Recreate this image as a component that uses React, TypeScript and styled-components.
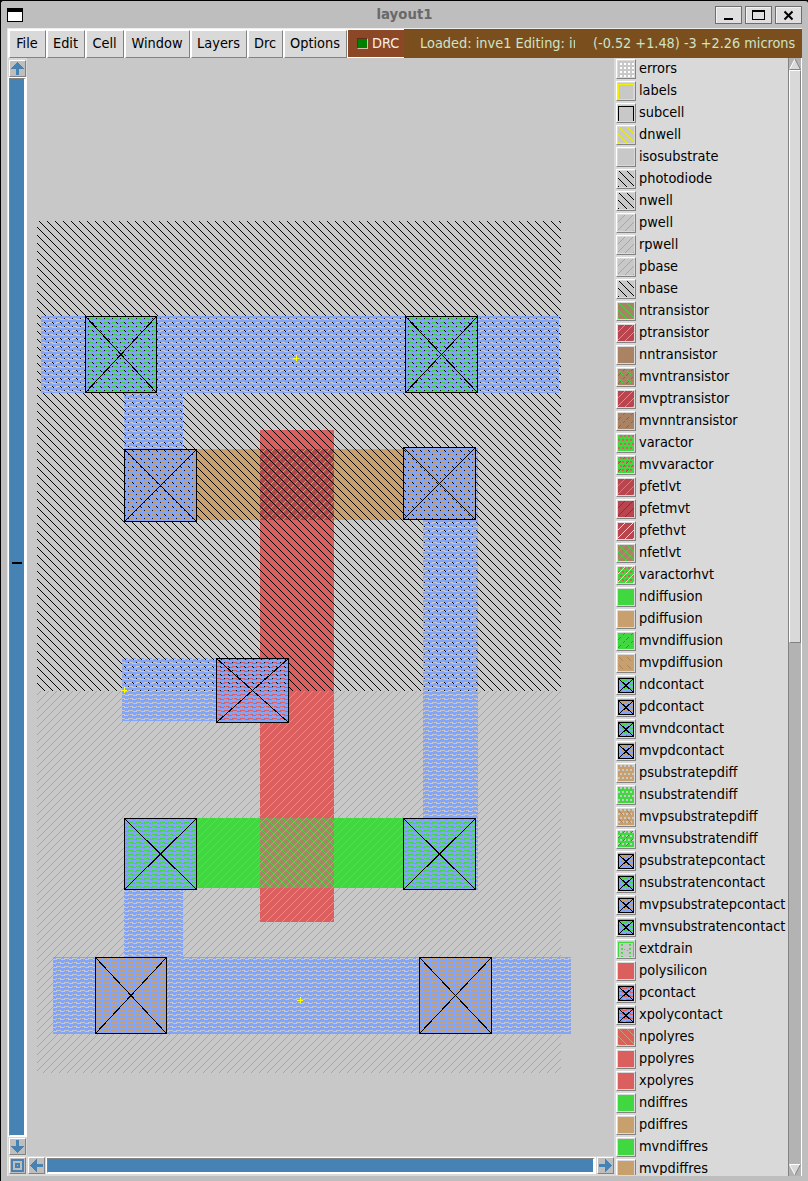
import React from "react";
import styled, { createGlobalStyle } from "styled-components";

const Global = createGlobalStyle`
  html, body { margin: 0; padding: 0; background: #000; }
  * { box-sizing: border-box; }
`;

const face = `"DejaVu Sans Condensed", "DejaVu Sans", sans-serif`;

const Window = styled.div`
  width: 808px;
  height: 1181px;
  background: #bebebe;
  border-top: 1px solid #000;
  border-left: 1px solid #000;
  border-top-left-radius: 3px;
  border-top-right-radius: 3px;
  display: flex;
  flex-direction: column;
  overflow: hidden;
  font-family: ${face};
  font-size: 14.4px;
  color: #000;
`;

const TitleBar = styled.div`
  height: 27px;
  flex: none;
  display: flex;
  align-items: center;
  padding: 0 6px 0 6px;
`;

const SysMenu = styled.div`
  width: 16px;
  height: 14px;
  background: #fff;
  border: 1px solid #000;
  border-top-width: 4px;
  margin-top: 1px;
`;

const Title = styled.div`
  flex: 1;
  text-align: center;
  font-family: "DejaVu Sans", sans-serif;
  font-weight: bold;
  font-size: 13.3px;
  line-height: 16px;
  color: #696969;
  padding-left: 71px;
`;

const WinButtons = styled.div`
  display: flex;
  gap: 3px;
`;

const WinButton = styled.div`
  width: 27px;
  height: 18px;
  background: #dfdfdf;
  border: 1px solid #6e6e6e;
  box-shadow: inset 1px 1px 0 #f4f4f4;
  svg { display: block; }
`;

const Client = styled.div`
  width: 795px;
  height: 1148px;
  margin-left: 6px;
  background: #d9d9d9;
  border-top: 1px solid #ececec;
  border-left: 1px solid #e6e6e6;
  display: flex;
  flex-direction: column;
`;

const MenuBar = styled.div`
  height: 29px;
  flex: none;
  display: flex;
  padding-left: 1px;
  background: #fff;
`;

const MenuButton = styled.div<{ $w: number }>`
  width: ${(p) => p.$w}px;
  height: 28px;
  margin-top: 1px;
  margin-right: 1px;
  background: #d9d9d9;
  border-top: 1px solid #fff;
  border-left: 1px solid #fff;
  border-right: 1px solid #828282;
  border-bottom: 1px solid #828282;
  text-align: center;
  line-height: 25px;
  white-space: nowrap;
  padding-right: 1px;
`;

const DrcToggle = styled.div`
  width: 56px;
  height: 27px;
  margin-top: 1px;
  background: #8b4726;
  color: #f5f0e8;
  display: flex;
  align-items: center;
  gap: 4px;
  padding-left: 9px;
  line-height: 25px;
`;

const Lamp = styled.i`
  width: 11px;
  height: 11px;
  background: #008000;
  border: 1px solid #5c2e18;
  border-right-color: #d8c0b0;
  border-bottom-color: #d8c0b0;
`;

const Status = styled.div`
  flex: 1;
  height: 29px;
  background: #7a4f1d;
  color: #cfe3c8;
  display: flex;
  line-height: 29px;
  white-space: nowrap;
  padding-left: 16px;
`;

const Loaded = styled.div`
  width: 155px;
  overflow: hidden;
`;

const Coords = styled.div`
  padding-left: 18px;
  font-size: 14.3px;
`;

const Body = styled.div`
  flex: 1;
  display: flex;
  min-height: 0;
`;

const LayoutPane = styled.div`
  width: 606px;
  display: flex;
  flex-direction: column;
`;

const PaneTop = styled.div`
  height: 1098px;
  display: flex;
`;

const VBar = styled.div`
  width: 19px;
  display: flex;
  flex-direction: column;
  align-items: center;
  padding-top: 2px;
`;

const VTrack = styled.div`
  width: 17px;
  height: 1058px;
  margin: 1px 0 2px;
  border: 1px solid #828282;
  border-right: 2px solid #fff;
  border-bottom: 1px solid #fff;
  outline: 1px solid #fff;
  background: #4682b4;
  display: flex;
  align-items: flex-start;
  justify-content: flex-start;
  padding: 483px 0 0 2px;
`;

const Mark = styled.i`
  width: 10px;
  height: 2px;
  background: #000;
`;

const HBar = styled.div`
  height: 20px;
  display: flex;
  align-items: flex-start;
  gap: 2px;
  padding: 1px 0 0 1px;
`;

const HTrack = styled.div`
  width: 549px;
  height: 15px;
  margin-top: 1px;
  border: 1px solid #828282;
  border-right: 2px solid #fff;
  border-bottom: 1px solid #fff;
  outline: 1px solid #fff;
  background: #4682b4;
`;

const ArrowButton = styled.div`
  width: 17px;
  height: 17px;
  flex: none;
  background: #bebebe;
  border: 1px solid #fff;
  border-right-color: #828282;
  border-bottom-color: #828282;
  svg { display: block; }
`;

const Canvas = styled.div`
  width: 587px;
  background: #c8c8c8;
  svg { display: block; }
`;

const LayerPane = styled.div`
  width: 174px;
  height: 1117px;
  overflow: hidden;
  padding: 1px 0 0 2px;
  background: #d9d9d9;
`;

const LayerRow = styled.div`
  height: 22px;
  display: flex;
  line-height: 19px;
  white-space: nowrap;
`;

const Swatch = styled.div`
  width: 20px;
  height: 20px;
  flex: none;
  border: 1px solid #fff;
  border-right-color: #828282;
  border-bottom-color: #828282;
  padding: 1px;
  margin-right: 3px;
  svg { display: block; }
`;

const LayerScroll = styled.div`
  width: 14px;
  height: 1118px;
  background: #b3b3b3;
  border-left: 1px solid #828282;
  border-right: 1px solid #fff;
  display: flex;
  flex-direction: column;
  justify-content: space-between;
`;

const Thumb = styled.div`
  height: 573px;
  background: #d9d9d9;
  border: 1px solid #fff;
  border-right-color: #828282;
  border-bottom-color: #828282;
`;

const C = {
  bg: "#c8c8c8",
  red: "#dc5f5f",
  green: "#41d741",
  tan: "#c8a06e",
  blue: "#82a5fa",
  brown: "#aa8264",
  pfet: "#b9464f",
};

const back = [".x......", "..x.....", "...x....", "....x...", ".....x..", "......x.", ".......x", "x......."];
const slash = ["......x.", ".....x..", "....x...", "...x....", "..x.....", ".x......", "x.......", ".......x"];
const stagger = ["..xx", "..xx", "....", "....", "xx..", "xx..", "....", "...."];

const bitmaps: Record<string, [string[], string]> = {
  nw: [back, "#000"],
  gslash: [back, C.green],
  tback: [back, C.tan],
  yback: [back, "#f0f000"],
  pw: [slash, C.tan],
  gold: [slash, "#c8961e"],
  mag: [slash, "#be0096"],
  yel: [slash, "#ffff00"],
  rdash: [["......x.", ".....x..", "........", "........", "..x.....", ".x......", "x.......", "........"], "#c84646"],
  gdash: [["........", "........", ".x......", "..x.....", "...x....", "....x...", "........", "........"], C.green],
  bdash: [["........", "........", ".x......", "..x.....", "...x....", "....x...", "........", "........"], C.brown],
  m1: [["xxxxxxxx", "xxxxxxxx", ".....xxx", ".xxx...."], C.blue],
  dots: [stagger, C.bg],
  wdots: [["....", "....", "..xx", "..xx"], "#fff"],
  rdots: [stagger, C.red],
};

const Bitmap = ({ id, x = 0, y = 0, name }: { id: string; name: string; x?: number; y?: number }) => {
  const [rows, color] = bitmaps[name];
  return (
    <pattern id={id} x={x} y={y} width={rows[0].length} height={rows.length} patternUnits="userSpaceOnUse">
      {rows.flatMap((r, j) =>
        r.split("").map((c, i) => (c === "x" ? <rect key={i + "-" + j} x={i} y={j} width={1} height={1} fill={color} /> : null))
      )}
    </pattern>
  );
};

const Box = ({ r, f }: { r: number[]; f: string }) => (
  <rect x={r[0]} y={r[1]} width={r[2] - r[0]} height={r[3] - r[1]} fill={f} />
);

const Contact = ({ r }: { r: number[] }) => (
  <g stroke="#000" fill="none">
    <rect x={r[0] + 0.5} y={r[1] + 0.5} width={r[2] - r[0] - 1} height={r[3] - r[1] - 1} />
    <path d={`M${r[0] + 0.5} ${r[1] + 0.5}L${r[2] - 0.5} ${r[3] - 0.5}M${r[2] - 0.5} ${r[1] + 0.5}L${r[0] + 0.5} ${r[3] - 0.5}`} />
  </g>
);

const Plus = ({ x, y }: { x: number; y: number }) => (
  <path d={`M${x - 3} ${y + 0.5}h6M${x + 0.5} ${y - 3}v6`} stroke="#ff0" fill="none" />
);

const metal = [
  [41, 316, 559, 393],
  [124, 393, 183, 449],
  [423, 447, 478, 890],
  [122, 658, 217, 721],
  [124, 890, 183, 957],
  [53, 957, 571, 1034],
];
const contacts = [
  [85, 316, 157, 393],
  [405, 316, 478, 393],
  [124, 449, 197, 522],
  [403, 447, 476, 520],
  [216, 658, 289, 723],
  [124, 818, 197, 890],
  [403, 818, 476, 890],
  [95, 957, 167, 1034],
  [419, 957, 492, 1034],
];

const Chip = () => (
  <svg width="587" height="1098" viewBox="27 58 587 1098" shapeRendering="crispEdges">
    <defs>
      <Bitmap id="c-nw" name="nw" x={1} />
      <Bitmap id="c-pw" name="pw" x={5} />
      <Bitmap id="c-pf" name="pw" x={4} />
      <Bitmap id="c-nf" name="gslash" x={-1} />
      <Bitmap id="c-m1" name="m1" />
      <Bitmap id="c-dots" name="dots" x={1} />
    </defs>
    <Box r={[197, 449, 403, 520]} f={C.tan} />
    <Box r={[124, 449, 197, 522]} f={C.tan} />
    <Box r={[403, 447, 476, 520]} f={C.tan} />
    <Box r={[124, 818, 476, 888]} f={C.green} />
    <Box r={[260, 430, 334, 922]} f={C.red} />
    <Box r={[216, 658, 289, 722]} f={C.red} />
    <Box r={[260, 449, 334, 520]} f={C.pfet} />
    <Box r={[260, 449, 334, 520]} f="url(#c-pf)" />
    <Box r={[260, 818, 334, 888]} f={C.brown} />
    <Box r={[260, 818, 334, 888]} f="url(#c-nf)" />
    {[contacts[0], contacts[1]].map((r, i) => (
      <g key={i}><Box r={r} f={C.green} /><Box r={r} f="url(#c-dots)" /></g>
    ))}
    {[contacts[7], contacts[8]].map((r, i) => (
      <g key={i}><Box r={r} f={C.tan} /><Box r={r} f="url(#c-dots)" /></g>
    ))}
    <Box r={[37, 221, 561, 691]} f="url(#c-nw)" />
    <Box r={[37, 691, 561, 1073]} f="url(#c-pw)" />
    {metal.map((r, i) => <Box key={i} r={r} f="url(#c-m1)" />)}
    {contacts.slice(2, 7).map((r, i) => <Box key={i} r={r} f="url(#c-m1)" />)}
    {contacts.map((r, i) => <Contact key={i} r={r} />)}
    <Plus x={124} y={690} />
    <Plus x={296} y={358} />
    <Plus x={300} y={1000} />
  </svg>
);

const layers: [string, string][] = [
  ["errors", "bg wdots"], ["labels", "bg ybox"], ["subcell", "bg kbox"], ["dnwell", "bg yback"],
  ["isosubstrate", "bg"], ["photodiode", "bg nw"], ["nwell", "bg nw"], ["pwell", "bg pw"],
  ["rpwell", "bg pw"], ["pbase", "bg pw"], ["nbase", "bg nw"], ["ntransistor", "brown gslash"],
  ["ptransistor", "pfet pw"], ["nntransistor", "brown"], ["mvntransistor", "brown gdash rdash"],
  ["mvptransistor", "pfet pw"], ["mvnntransistor", "brown rdash"], ["varactor", "green rdots"],
  ["mvvaractor", "green rdots rdash"], ["pfetlvt", "pfet gold"], ["pfetmvt", "pfet mag"],
  ["pfethvt", "pfet yel"], ["nfetlvt", "brown gslash gold"], ["varactorhvt", "green rdots yel"],
  ["ndiffusion", "green"], ["pdiffusion", "tan"], ["mvndiffusion", "green rdash"],
  ["mvpdiffusion", "tan bdash"], ["ndcontact", "green m1 x"], ["pdcontact", "tan m1 x"],
  ["mvndcontact", "green rdash m1 x"], ["mvpdcontact", "tan bdash m1 x"], ["psubstratepdiff", "tan dots"],
  ["nsubstratendiff", "green dots"], ["mvpsubstratepdiff", "tan dots bdash"],
  ["mvnsubstratendiff", "green dots rdash"], ["psubstratepcontact", "tan dots m1 x"],
  ["nsubstratencontact", "green dots m1 x"], ["mvpsubstratepcontact", "tan dots bdash m1 x"],
  ["mvnsubstratencontact", "green dots rdash m1 x"], ["extdrain", "bg ext"], ["polysilicon", "red"],
  ["pcontact", "red m1 x"], ["xpolycontact", "red m1 x"], ["npolyres", "red tback"], ["ppolyres", "red"],
  ["xpolyres", "red"], ["ndiffres", "green"], ["pdiffres", "tan"], ["mvndiffres", "green"], ["mvpdiffres", "tan"],
];

const Tile = ({ spec }: { spec: string }) => (
  <svg width="16" height="16" shapeRendering="crispEdges">
    {spec.split(" ").map((s) => {
      if (s in C) return <rect key={s} width="16" height="16" fill={C[s as keyof typeof C]} />;
      if (s === "ybox") return <path key={s} d="M.5 16V1.5H15.5V16" stroke="#f0f000" fill="none" />;
      if (s === "kbox") return <path key={s} d="M.5 16V1.5H15.5V16" stroke="#000" fill="none" />;
      if (s === "x") return <path key={s} d="M.5 1.5H15.5V15.5H.5ZL15.5 15.5M15.5 1.5L.5 15.5" stroke="#000" fill="none" />;
      if (s === "ext")
        return (
          <g key={s} fill="none">
            <path d="M.5 16V1.5H15.5V16" stroke={C.green} />
            <path d="M4 3v13M12 3v13" stroke={C.green} strokeDasharray="1 3" strokeWidth="2" />
            <path d="M4 4v11M12 4v11" stroke={C.tan} strokeDasharray="1 3" strokeWidth="2" />
            <path d="M6 8.5h1M9 9.5h1" stroke={C.green} />
          </g>
        );
      return <rect key={s} width="16" height="16" fill={`url(#t-${s})`} />;
    })}
  </svg>
);

const TileDefs = () => (
  <defs>
    {Object.keys(bitmaps).map((k) => (
      <Bitmap key={k} id={"t-" + k} name={k} />
    ))}
  </defs>
);

const arrows: Record<string, string> = {
  up: "M7.5 1L14 8H9V14H6V8H1Z",
  down: "M6 1H9V7H14L7.5 14L1 7H6Z",
  left: "M1 7.5L8 1V6H14V9H8V14Z",
  right: "M14 7.5L7 1V6H1V9H7V14Z",
};

const Arrow = ({ dir }: { dir: string }) => (
  <ArrowButton>
    <svg width="15" height="15" shapeRendering="crispEdges">
      <path d={arrows[dir]} fill="#4682b4" />
    </svg>
  </ArrowButton>
);

const menus: [string, number][] = [
  ["File", 37], ["Edit", 38], ["Cell", 38], ["Window", 65], ["Layers", 56], ["Drc", 35], ["Options", 63],
];

export default function App() {
  return (
    <Window>
      <Global />
      <TitleBar>
        <SysMenu />
        <Title>layout1</Title>
        <WinButtons>
          <WinButton><svg width="25" height="16"><path d="M8 12h9" stroke="#000" strokeWidth="2" shapeRendering="crispEdges" /></svg></WinButton>
          <WinButton><svg width="25" height="16" shapeRendering="crispEdges"><path d="M6.5 12.5V3.5H18.5V12.5Z M6 4.5H19" stroke="#000" fill="none" /></svg></WinButton>
          <WinButton><svg width="25" height="16"><path d="M8.5 4.5L16.5 12.5M16.5 4.5L8.5 12.5" stroke="#000" strokeWidth="2" /></svg></WinButton>
        </WinButtons>
      </TitleBar>
      <Client>
        <MenuBar>
          {menus.map(([m, w]) => <MenuButton key={m} $w={w}>{m}</MenuButton>)}
          <DrcToggle><Lamp />DRC</DrcToggle>
          <Status>
            <Loaded>Loaded: inve1 Editing: inve1</Loaded>
            <Coords>(-0.52 +1.48) -3 +2.26 microns</Coords>
          </Status>
        </MenuBar>
        <Body>
          <LayoutPane>
            <PaneTop>
              <VBar>
                <Arrow dir="up" />
                <VTrack><Mark /></VTrack>
                <Arrow dir="down" />
              </VBar>
              <Canvas><Chip /></Canvas>
            </PaneTop>
            <HBar>
              <ArrowButton>
                <svg width="15" height="15" shapeRendering="crispEdges" fill="none" stroke="#4682b4">
                  <rect x="2" y="2" width="11" height="11" strokeWidth="2" />
                  <rect x="6" y="6" width="3" height="3" strokeWidth="2" />
                </svg>
              </ArrowButton>
              <Arrow dir="left" />
              <HTrack />
              <Arrow dir="right" />
            </HBar>
          </LayoutPane>
          <LayerPane>
            <svg width="0" height="0" style={{ display: "block" }}><TileDefs /></svg>
            {layers.map(([name, spec]) => (
              <LayerRow key={name}>
                <Swatch><Tile spec={spec} /></Swatch>
                {name}
              </LayerRow>
            ))}
          </LayerPane>
          <LayerScroll>
            <div>
              <svg width="12" height="12" style={{ display: "block" }}><path d="M6 1L11.5 11.5H.5Z" fill="#d9d9d9" /><path d="M6 1L.5 11.5" stroke="#fff" /><path d="M6 1L11.5 11.5H.5" stroke="#828282" fill="none" /></svg>
              <Thumb />
            </div>
            <svg width="12" height="12" style={{ display: "block" }}><path d="M.5 .5H11.5L6 11Z" fill="#d9d9d9" /><path d="M11.5 .5H.5L6 11" stroke="#fff" fill="none" /><path d="M11.5 .5L6 11" stroke="#828282" /></svg>
          </LayerScroll>
        </Body>
      </Client>
    </Window>
  );
}
